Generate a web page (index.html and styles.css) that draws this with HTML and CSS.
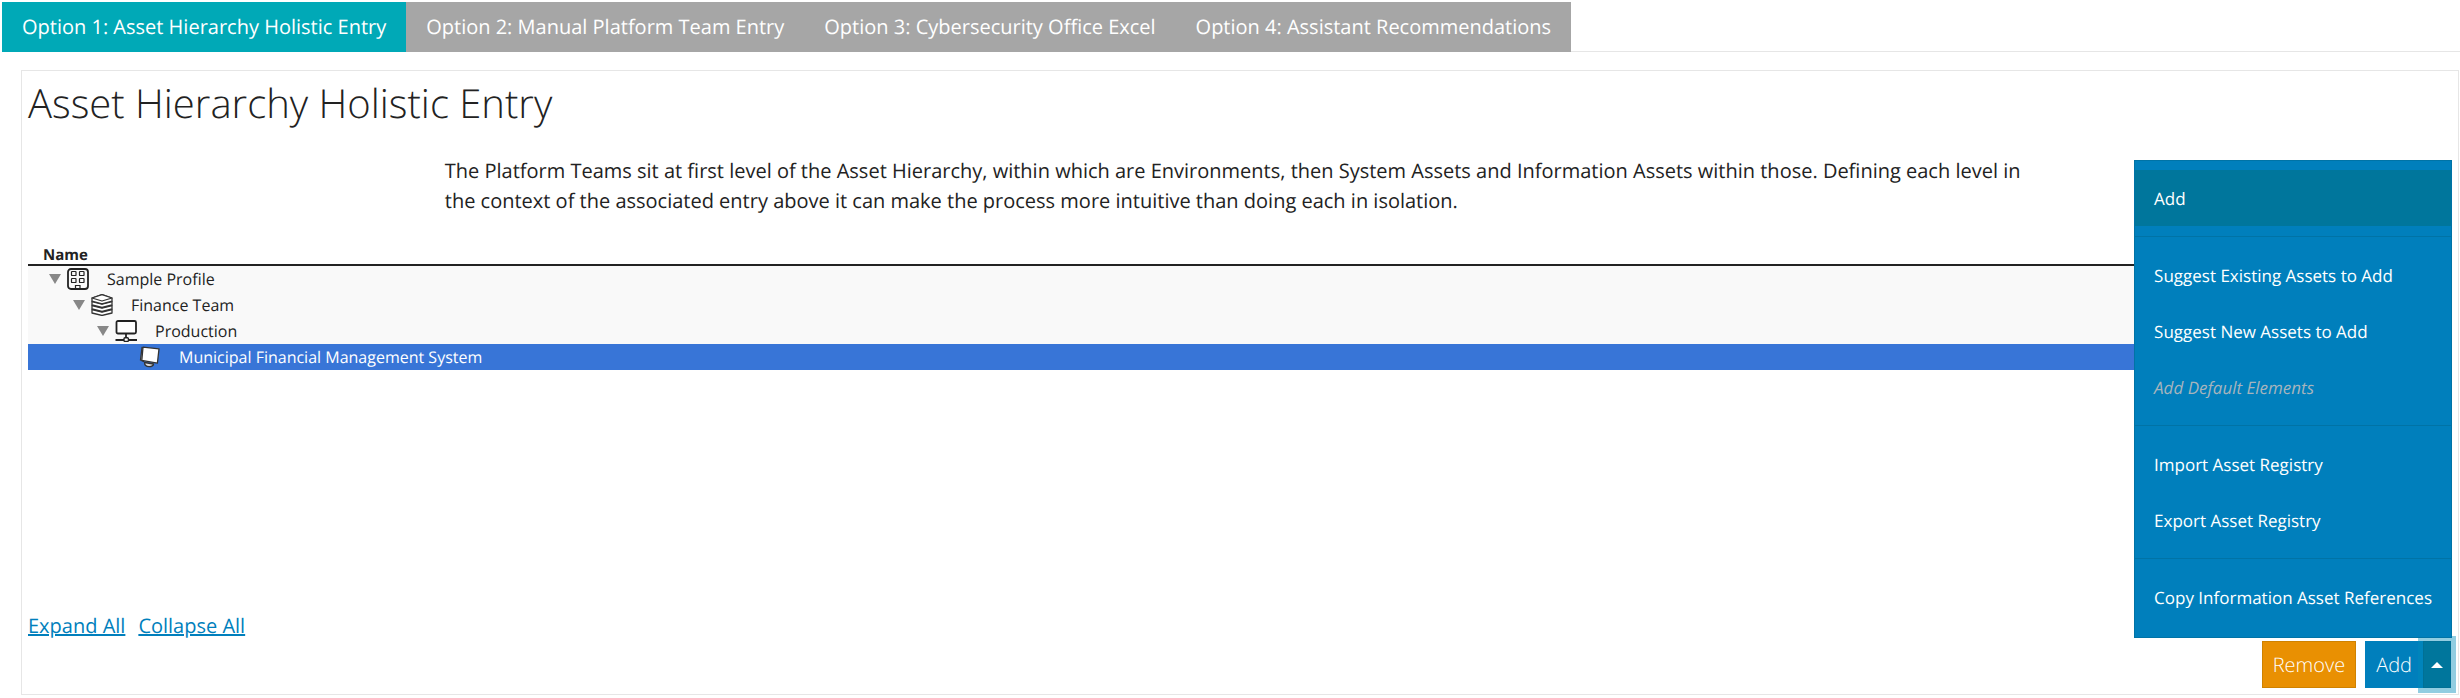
FILE: index.html
```
<!DOCTYPE html>
<html lang="en">
<head>
    <meta charset="UTF-8">
    <meta name="viewport" content="width=device-width, initial-scale=1.0">
    <title>Asset Hierarchy Holistic Entry</title>
    <link rel="stylesheet" href="styles.css">
</head>
<body>

<nav class="tabs">
    <a class="tab active" href="#option1">Option 1: Asset Hierarchy Holistic Entry</a>
    <a class="tab" href="#option2">Option 2: Manual Platform Team Entry</a>
    <a class="tab" href="#option3">Option 3: Cybersecurity Office Excel</a>
    <a class="tab" href="#option4">Option 4: Assistant Recommendations</a>
</nav>

<main class="panel" id="option1">
    <h1>Asset Hierarchy Holistic Entry</h1>

    <p class="intro">The Platform Teams sit at first level of the Asset Hierarchy, within which are Environments, then System Assets and Information Assets within those. Defining each level in the context of the associated entry above it can make the process more intuitive than doing each in isolation.</p>

    <!-- Asset tree -->
    <div class="tree-wrap">
        <table class="tree">
            <thead>
                <tr><th>Name</th></tr>
            </thead>
            <tbody>
                <tr>
                    <td>
                        <div class="node level-1">
                            <span class="arrow"></span>
                            <svg class="icon" viewBox="0 0 22 22" fill="none" stroke="#222" stroke-width="1.2">
                                <rect x="1" y="1" width="20" height="20" rx="3" stroke-width="1.8"/>
                                <rect x="4.500" y="3.500" width="4.500" height="4" rx=".6"/>
                                <rect x="12.500" y="3.500" width="4.500" height="4" rx=".6"/>
                                <rect x="4.500" y="10.500" width="4.500" height="4" rx=".6"/>
                                <rect x="12.500" y="10.500" width="4.500" height="4" rx=".6"/>
                                <path d="M8.500 21v-3.500h4.500V21"/>
                            </svg>
                            <span class="name">Sample Profile</span>
                        </div>
                    </td>
                </tr>
                <tr>
                    <td>
                        <div class="node level-2">
                            <span class="arrow"></span>
                            <svg class="icon" viewBox="0 0 22 22" fill="#fff" stroke="#333" stroke-width="1.3" stroke-linejoin="round">
                                <path d="M1 15.500l10 2.500 10-2.500V19l-10 2.500L1 19z"/>
                                <path d="M1 11.500L11 14l10-2.500V15l-10 2.500L1 15z"/>
                                <path d="M1 7.500L11 10l10-2.500V11l-10 2.500L1 11z"/>
                                <path d="M1 4l10-3.400L21 4v3.200l-10 2.600L1 7.200z"/>
                                <path d="M1 4l10 3 10-3L11 .6z"/>
                            </svg>
                            <span class="name">Finance Team</span>
                        </div>
                    </td>
                </tr>
                <tr>
                    <td>
                        <div class="node level-3">
                            <span class="arrow"></span>
                            <svg class="icon" viewBox="0 0 22 22" fill="#fff" stroke="#222" stroke-width="1.8">
                                <rect x="1.500" y="1" width="19.500" height="12.500" rx="1.500"/>
                                <path d="M11 13.500V18M.5 20H22"/>
                                <rect x="9" y="17.800" width="4.400" height="3.600" rx="1" stroke-width="1.4"/>
                            </svg>
                            <span class="name">Production</span>
                        </div>
                    </td>
                </tr>
                <tr class="selected">
                    <td>
                        <div class="node level-4">
                            <span class="arrow leaf"></span>
                            <svg class="icon" viewBox="0 0 22 22" fill="#fff" stroke="#333" stroke-width="1.3" stroke-linejoin="round">
                                <path d="M5.500 16.500l9 1.500c.5 3-9 4.500-9-1.500z" fill="#ddd"/>
                                <path d="M3 1.500L1.500 14l3 1.500L6 2.500z" fill="#ccc"/>
                                <path d="M4 1.200l16 1.600-1.600 14.400L2.800 14.400z"/>
                            </svg>
                            <span class="name">Municipal Financial Management System</span>
                        </div>
                    </td>
                </tr>
            </tbody>
        </table>
    </div>

    <div class="tree-links">
        <a href="#expand">Expand All</a>
        <a href="#collapse">Collapse All</a>
    </div>

    <div class="actions">
        <button class="btn btn-remove" type="button">Remove</button>
        <div class="split">
            <button class="btn btn-add" type="button">Add</button>
            <button class="btn btn-toggle" type="button" aria-label="More add options" aria-expanded="true"><span class="caret"></span></button>
            <ul class="menu">
                <li><button class="menu-item current" type="button">Add</button></li>
                <li class="divider"></li>
                <li><button class="menu-item" type="button">Suggest Existing Assets to Add</button></li>
                <li><button class="menu-item" type="button">Suggest New Assets to Add</button></li>
                <li><button class="menu-item" type="button" disabled>Add Default Elements</button></li>
                <li class="divider"></li>
                <li><button class="menu-item" type="button">Import Asset Registry</button></li>
                <li><button class="menu-item" type="button">Export Asset Registry</button></li>
                <li class="divider"></li>
                <li><button class="menu-item" type="button">Copy Information Asset References</button></li>
            </ul>
        </div>
    </div>
</main>

</body>
</html>
```
FILE: styles.css
```
* {
    box-sizing: border-box;
}
body {
    margin: 0;
    padding: 2px 0 3px 2px;
    font-family: "Open Sans", sans-serif;
    font-size: 20px;
    line-height: 30px;
    color: #222222;
    background-color: #ffffff;
    text-rendering: geometricPrecision;
}

/* Tabs */
.tabs {
    display: flex;
    height: 50px;
    box-shadow: inset 0 -1px 0 #e6e6e6;
}
.tab {
    padding: 10px 20px;
    color: #ffffff;
    font-weight: 500;
    text-decoration: none;
    background-color: #a6a6a6;
}
.tab.active {
    background-color: #00a9b7;
}

.panel {
    margin: 18px 1px 0 19px;
    padding: 0 7px 0 6px;
    border: 1px solid #e6e6e6;
}
h1 {
    margin: 5px 0 26px;
    font-size: 40px;
    font-weight: 300;
    line-height: 54px;
}
.intro {
    margin: 0 17.2%;
}

/* Tree */
.tree-wrap {
    min-height: 395px;
    padding-top: 26px;
}
.tree {
    width: 100%;
    border-collapse: collapse;
    font-size: 16px;
    line-height: 26px;
}
.tree th {
    padding: 4px 15px 0;
    border-bottom: 2px solid #222222;
    font-size: 15px;
    line-height: 18px;
    text-align: left;
}
.tree td {
    padding: 0;
    background-color: #f9f9f9;
}
.tree .selected td {
    color: #ffffff;
    font-weight: 500;
    background-color: #3875d7;
}
.node {
    display: flex;
    align-items: center;
    height: 26px;
}
.level-1 {
    padding-left: 21px;
}
.level-2 {
    padding-left: 45px;
}
.level-3 {
    padding-left: 69px;
}
.level-4 {
    padding-left: 93px;
}
.arrow {
    border: 6px solid transparent;
    border-top: 10px solid #888888;
    border-bottom: 0;
}
.arrow.leaf {
    border-top-color: transparent;
}
.icon {
    width: 22px;
    height: 22px;
    margin: 0 18px 0 6px;
}

.tree-links {
    display: flex;
    gap: 13px;
}
.tree-links a {
    color: #007fbc;
    text-decoration-thickness: 2px;
}

/* Buttons */
.actions {
    display: flex;
    justify-content: flex-end;
    gap: 9px;
    margin-bottom: 6px;
}
.split {
    position: relative;
    display: flex;
}
.btn {
    height: 47px;
    padding: 0 10px;
    border: 1px solid #007095;
    color: #ffffff;
    font: 300 20px "Open Sans", sans-serif;
    text-rendering: inherit;
    cursor: pointer;
}
.btn-remove {
    border-color: #cf8200;
    background-color: #e99002;
}
.btn-add {
    border-color: #007fbc;
    background-color: #007fbc;
}
.btn-toggle {
    width: 28px;
    padding: 0 7px;
    background-color: #00769c;
    box-shadow: 0 0 0 5px rgba(0, 140, 186, 0.43);
}
.caret {
    display: block;
    width: 12px;
    border: 6px solid transparent;
    border-top: 0;
    border-bottom-color: #ffffff;
}

/* Drop-up menu */
.menu {
    position: absolute;
    right: -1px;
    bottom: 50px;
    margin: 0;
    padding: 9px 0 12px;
    border: 1px solid #0073a6;
    list-style: none;
    background-color: #007fbc;
}
.menu-item {
    display: block;
    width: 100%;
    height: 56px;
    padding: 0 19px;
    border: 0;
    color: #ffffff;
    font: 400 17px "Open Sans", sans-serif;
    text-align: left;
    text-rendering: inherit;
    white-space: nowrap;
    background: none;
    cursor: pointer;
}
.menu-item.current {
    background-color: #00769c;
}
.menu-item:disabled {
    color: #a6b4bc;
    font-style: italic;
    cursor: default;
}
.divider {
    height: 1px;
    margin: 10px 0;
    background-color: #0073a6;
}
```
